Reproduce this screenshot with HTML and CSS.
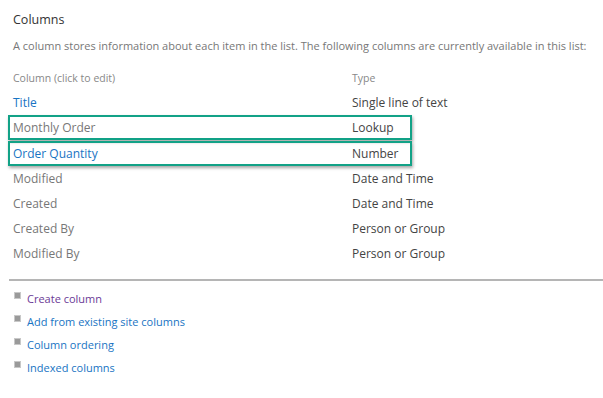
FILE: index.html
```html
<!DOCTYPE html>
<html lang="en">
<head>
    <meta charset="UTF-8">
    <title>Columns</title>
    <link rel="stylesheet" href="styles.css">
</head>
<body>
    <div class="page">
        <h3 class="section-title">Columns</h3>
        <p class="description">A column stores information about each item in the list. The following columns are currently available in this list:</p>

        <div class="columns">
            <div class="row header">
                <span>Column (click to edit)</span>
                <span>Type</span>
            </div>
            <div class="row">
                <a class="name link">Title</a>
                <span class="type">Single line of text</span>
            </div>
            <div class="row marked">
                <a class="name">Monthly Order</a>
                <span class="type">Lookup</span>
            </div>
            <div class="row marked">
                <a class="name link">Order Quantity</a>
                <span class="type">Number</span>
            </div>
            <div class="row">
                <a class="name">Modified</a>
                <span class="type">Date and Time</span>
            </div>
            <div class="row">
                <a class="name">Created</a>
                <span class="type">Date and Time</span>
            </div>
            <div class="row">
                <a class="name">Created By</a>
                <span class="type">Person or Group</span>
            </div>
            <div class="row">
                <a class="name">Modified By</a>
                <span class="type">Person or Group</span>
            </div>
        </div>

        <hr class="divider">

        <ul class="actions">
            <li><a class="visited">Create column</a></li>
            <li><a>Add from existing site columns</a></li>
            <li><a>Column ordering</a></li>
            <li><a>Indexed columns</a></li>
        </ul>
    </div>
</body>
</html>
```

FILE: styles.css
```css
* {
    box-sizing: border-box;
}
body {
    margin: 0;
    background-color: #fff;
    font-family: "Open Sans", "Noto Sans", sans-serif;
    color: #444;
}
.page {
    padding: 11px 0 0 13px;
}
.section-title {
    margin: 0;
    font-size: 12.5px;
    font-weight: 400;
    color: #333;
    line-height: 18px;
}
.description {
    margin: 9px 0 0;
    font-size: 11px;
    color: #777;
    line-height: 16px;
    white-space: nowrap;
}
.columns {
    margin-top: 12px;
}
.row {
    display: grid;
    grid-template-columns: 339px max-content;
    height: 25px;
    align-items: center;
    font-size: 12px;
    white-space: nowrap;
    margin-left: -5px;
    padding-left: 5px;
    width: 404px;
}
.row.header {
    font-size: 10.5px;
    color: #888;
    height: 24px;
}
.name {
    color: #777;
}
.name.link {
    color: #1874c3;
}
.type {
    color: #444;
}
.row.marked {
    border: 2px solid #12a287;
    box-shadow: 1px 2px 3px rgba(0, 0, 0, .35);
    margin-bottom: 1px;
    padding-left: 3px;
}
.row.marked + .row.marked {
    margin-bottom: 0;
}
.divider {
    margin: 13px 0 0 -4px;
    border: 0;
    border-top: 2px solid #b5b5b5;
}
.actions {
    list-style: none;
    margin: 6px 0 0;
    padding: 0;
}
.actions li {
    display: flex;
    align-items: center;
    height: 23px;
    font-size: 11px;
}
.actions li:before {
    content: "";
    width: 5px;
    height: 5px;
    background: #9a9a9a;
    border: 1px solid #c8c8c8;
    margin: -6px 6px 0 1px;
}
.actions a {
    color: #1874c3;
}
.actions a.visited {
    color: #6b3a96;
}
```
